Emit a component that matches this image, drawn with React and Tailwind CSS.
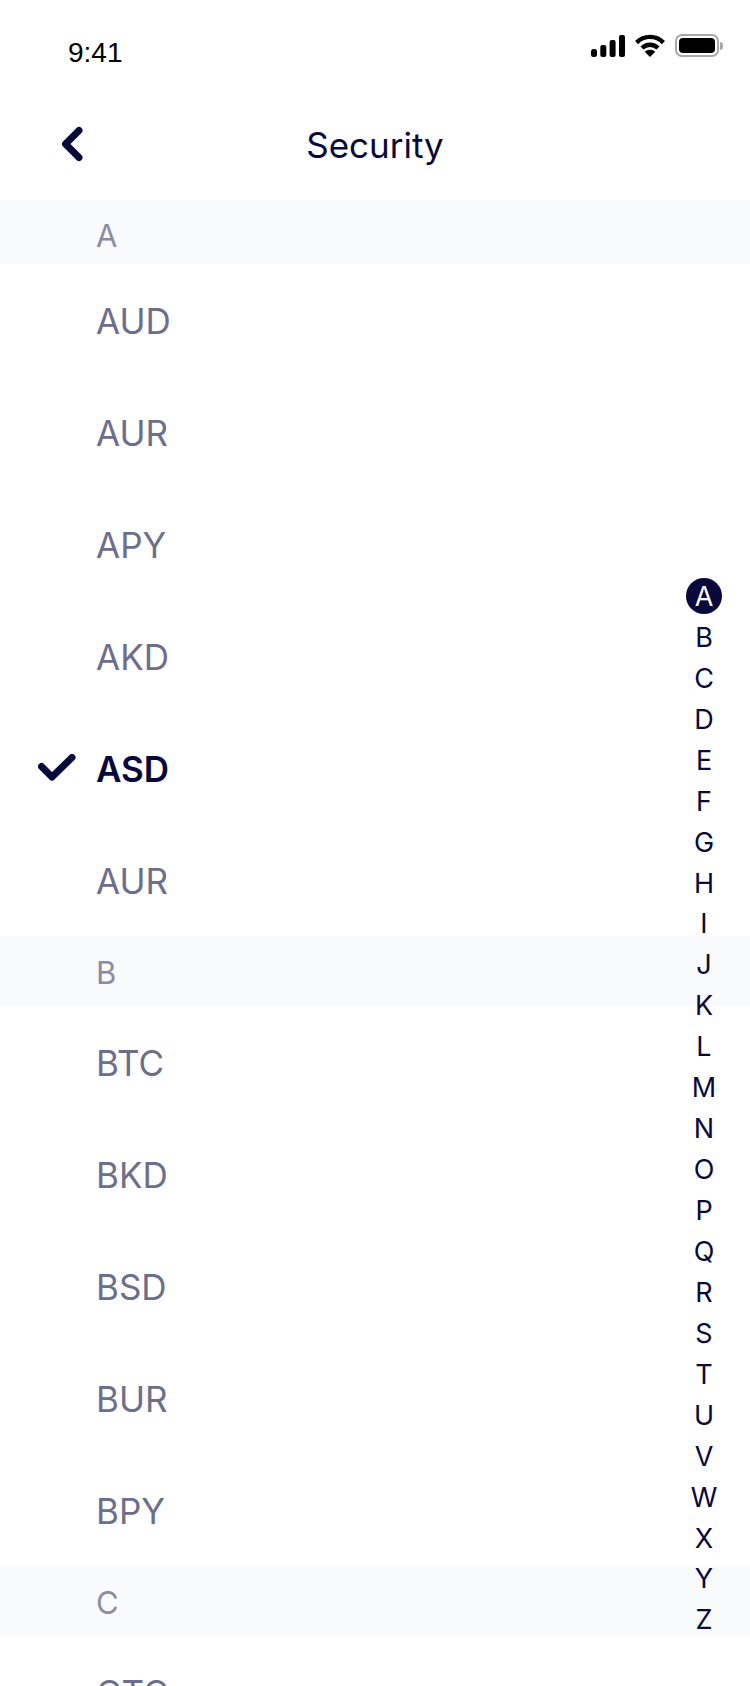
import React from 'react';

const SECTIONS = [
  { letter: 'A', height: 'h-[64px] pt-[9px]', items: ['AUD', 'AUR', 'APY', 'AKD', 'ASD', 'AUR'] },
  { letter: 'B', height: 'h-[70px] pt-[4px]', items: ['BTC', 'BKD', 'BSD', 'BUR', 'BPY'] },
  { letter: 'C', height: 'h-[70px] pt-[4px]', items: ['CTC'] },
];

const LETTERS = 'ABCDEFGHIJKLMNOPQRSTUVWXYZ'.split('');

const StatusIcons = () => (
  <div className="flex items-center gap-[10px]">
    <svg width="34" height="22" viewBox="0 0 34 22" fill="#000">
      <rect x="0" y="14" width="6" height="8" rx="2.5" />
      <rect x="9.3" y="10" width="6" height="12" rx="2" />
      <rect x="18.6" y="5" width="6" height="17" rx="2" />
      <rect x="28" y="0" width="6" height="22" rx="2" />
    </svg>
    <svg width="30" height="23" viewBox="0 0 30 23" fill="none" stroke="#000" strokeWidth="4.4">
      <path d="M1.6 8.6C9 1 21 1 28.4 8.6" />
      <path d="M7 14C11.5 9.6 18.5 9.6 23 14" />
      <path d="M15 23L9.8 17.8C12.8 15.2 17.2 15.2 20.2 17.8Z" fill="#000" stroke="none" />
    </svg>
    <div className="flex items-center">
      <div className="w-[44px] h-[23px] rounded-[7px] border-2 border-[#a9a9a9] p-[2px]">
        <div className="w-full h-full rounded-[4px] bg-black" />
      </div>
      <div className="w-[3px] h-[8px] ml-[1px] rounded-r-full bg-[#a9a9a9]" />
    </div>
  </div>
);

const Row = ({ label, selected }) => (
  <div className="relative flex items-center h-[112px] pl-[96px] pt-[3px]">
    {selected && (
      <svg className="absolute left-[38px] top-[42px]" width="38" height="27" viewBox="0 0 38 27" fill="none" stroke="#08083a" strokeWidth="7" strokeLinecap="round" strokeLinejoin="round">
        <path d="M3.5 12.5L14 23L34 3.5" />
      </svg>
    )}
    <span className={selected ? 'text-[35px] font-semibold text-[#08083a]' : 'text-[35px] font-normal text-[#6c6e8c]'}>{label}</span>
  </div>
);

export default function App() {
  return (
    <div className="relative h-[1686px] w-[750px] overflow-hidden bg-white font-['Inter',sans-serif]">
      {/* Status bar */}
      <div className="flex h-[90px] items-start justify-between pl-[68px] pr-[27px]">
        <span className="mt-[37px] font-['Liberation_Sans',sans-serif] text-[28px] leading-[32px] text-black">9:41</span>
        <div className="mt-[34px]">
          <StatusIcons />
        </div>
      </div>

      {/* Nav */}
      <div className="grid h-[110px] grid-cols-[1fr_auto_1fr] items-center">
        <div className="pb-[2px] pl-[60px]">
          <svg className="block" width="24" height="38" viewBox="0 0 24 38" fill="none" stroke="#08083a" strokeWidth="7" strokeLinecap="round" strokeLinejoin="round">
            <path d="M19 5.5L5.5 19L19 32.5" />
          </svg>
        </div>
        <h1 className="text-[35px] text-[#08083a]">Security</h1>
        <div />
      </div>

      {/* List */}
      {SECTIONS.map((section) => (
        <div key={section.letter}>
          <div className={`flex items-center pl-[96px] bg-[#f9fafc] text-[31px] font-normal text-[#8b8ca4] ${section.height}`}>
            {section.letter}
          </div>
          {section.items.map((item, i) => (
            <Row key={item + i} label={item} selected={item === 'ASD'} />
          ))}
        </div>
      ))}

      {/* Alphabet index */}
      <div className="absolute right-[26px] top-[576px] flex w-[40px] flex-col items-center">
        {LETTERS.map((letter, i) => (
          <div key={letter} className="flex h-[40.95px] items-center justify-center text-[27px] leading-none text-[#08083a]">
            {i === 0 ? (
              <span className="flex h-[36px] w-[36px] items-center justify-center rounded-full bg-[#08083a] text-white">{letter}</span>
            ) : letter}
          </div>
        ))}
      </div>
    </div>
  );
}
